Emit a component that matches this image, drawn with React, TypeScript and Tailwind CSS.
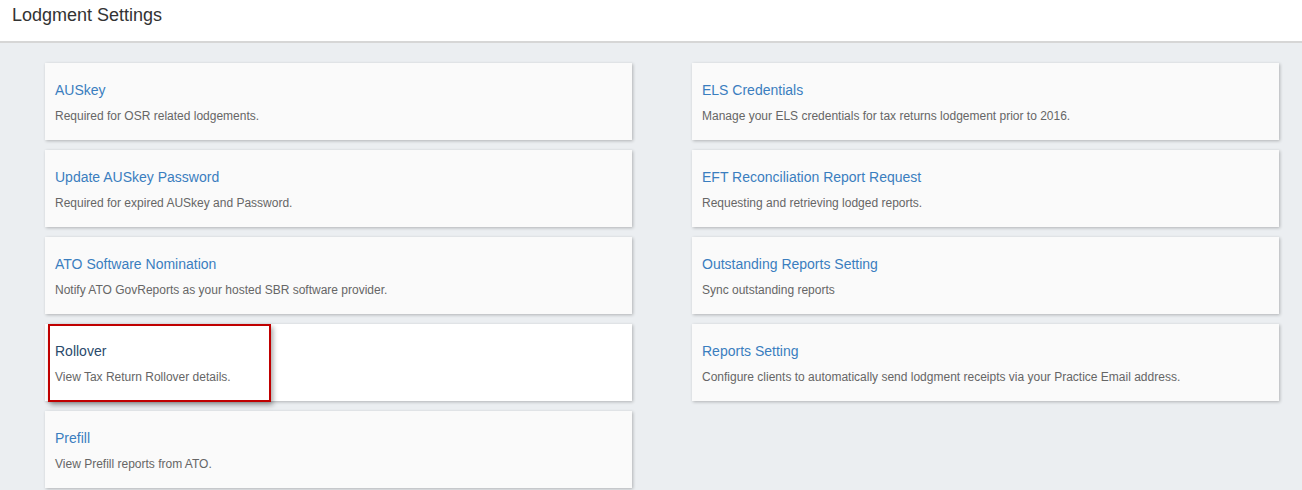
import React from "react";

type Item = { title: string; desc: string; highlight?: boolean };

const left: Item[] = [
  { title: "AUSkey", desc: "Required for OSR related lodgements." },
  { title: "Update AUSkey Password", desc: "Required for expired AUSkey and Password." },
  { title: "ATO Software Nomination", desc: "Notify ATO GovReports as your hosted SBR software provider." },
  { title: "Rollover", desc: "View Tax Return Rollover details.", highlight: true },
  { title: "Prefill", desc: "View Prefill reports from ATO." },
];

const right: Item[] = [
  { title: "ELS Credentials", desc: "Manage your ELS credentials for tax returns lodgement prior to 2016." },
  { title: "EFT Reconciliation Report Request", desc: "Requesting and retrieving lodged reports." },
  { title: "Outstanding Reports Setting", desc: "Sync outstanding reports" },
  { title: "Reports Setting", desc: "Configure clients to automatically send lodgment receipts via your Practice Email address." },
];

function Card({ item }: { item: Item }) {
  return (
    <div
      className={`relative h-[77px] pl-[10px] pt-[17px] shadow-[1px_1px_3px_rgba(0,0,0,0.25)] ${
        item.highlight ? "bg-white" : "bg-[#fafafa]"
      }`}
    >
      <div className={`text-[14px] leading-[20px] ${item.highlight ? "text-[#2a4a6b]" : "text-[#3a7ebf]"}`}>
        {item.title}
      </div>
      <div className="mt-[8px] text-[12px] leading-[17px] text-[#666666]">{item.desc}</div>
      {item.highlight && (
        <div className="pointer-events-none absolute left-[3px] top-0 h-[78px] w-[223px] border-2 border-[#c00000] shadow-[2px_3px_5px_rgba(0,0,0,0.35)]" />
      )}
    </div>
  );
}

export default function App() {
  return (
    <div className="h-[490px] w-[1302px] overflow-hidden bg-[#ebeef1]" style={{ fontFamily: '"Liberation Sans", Arial, sans-serif' }}>
      <div className="h-[43px] border-b-2 border-[#d6d6d6] bg-white pl-[12px] pt-[4px]">
        <h1 className="text-[18px] leading-[22px] text-[#333333]">Lodgment Settings</h1>
      </div>
      <div className="grid grid-cols-2 gap-x-[60px] pl-[45px] pr-[23px] pt-[20px]">
        <div className="flex flex-col gap-[10px]">
          {left.map((it) => (
            <Card key={it.title} item={it} />
          ))}
        </div>
        <div className="flex flex-col gap-[10px]">
          {right.map((it) => (
            <Card key={it.title} item={it} />
          ))}
        </div>
      </div>
    </div>
  );
}
